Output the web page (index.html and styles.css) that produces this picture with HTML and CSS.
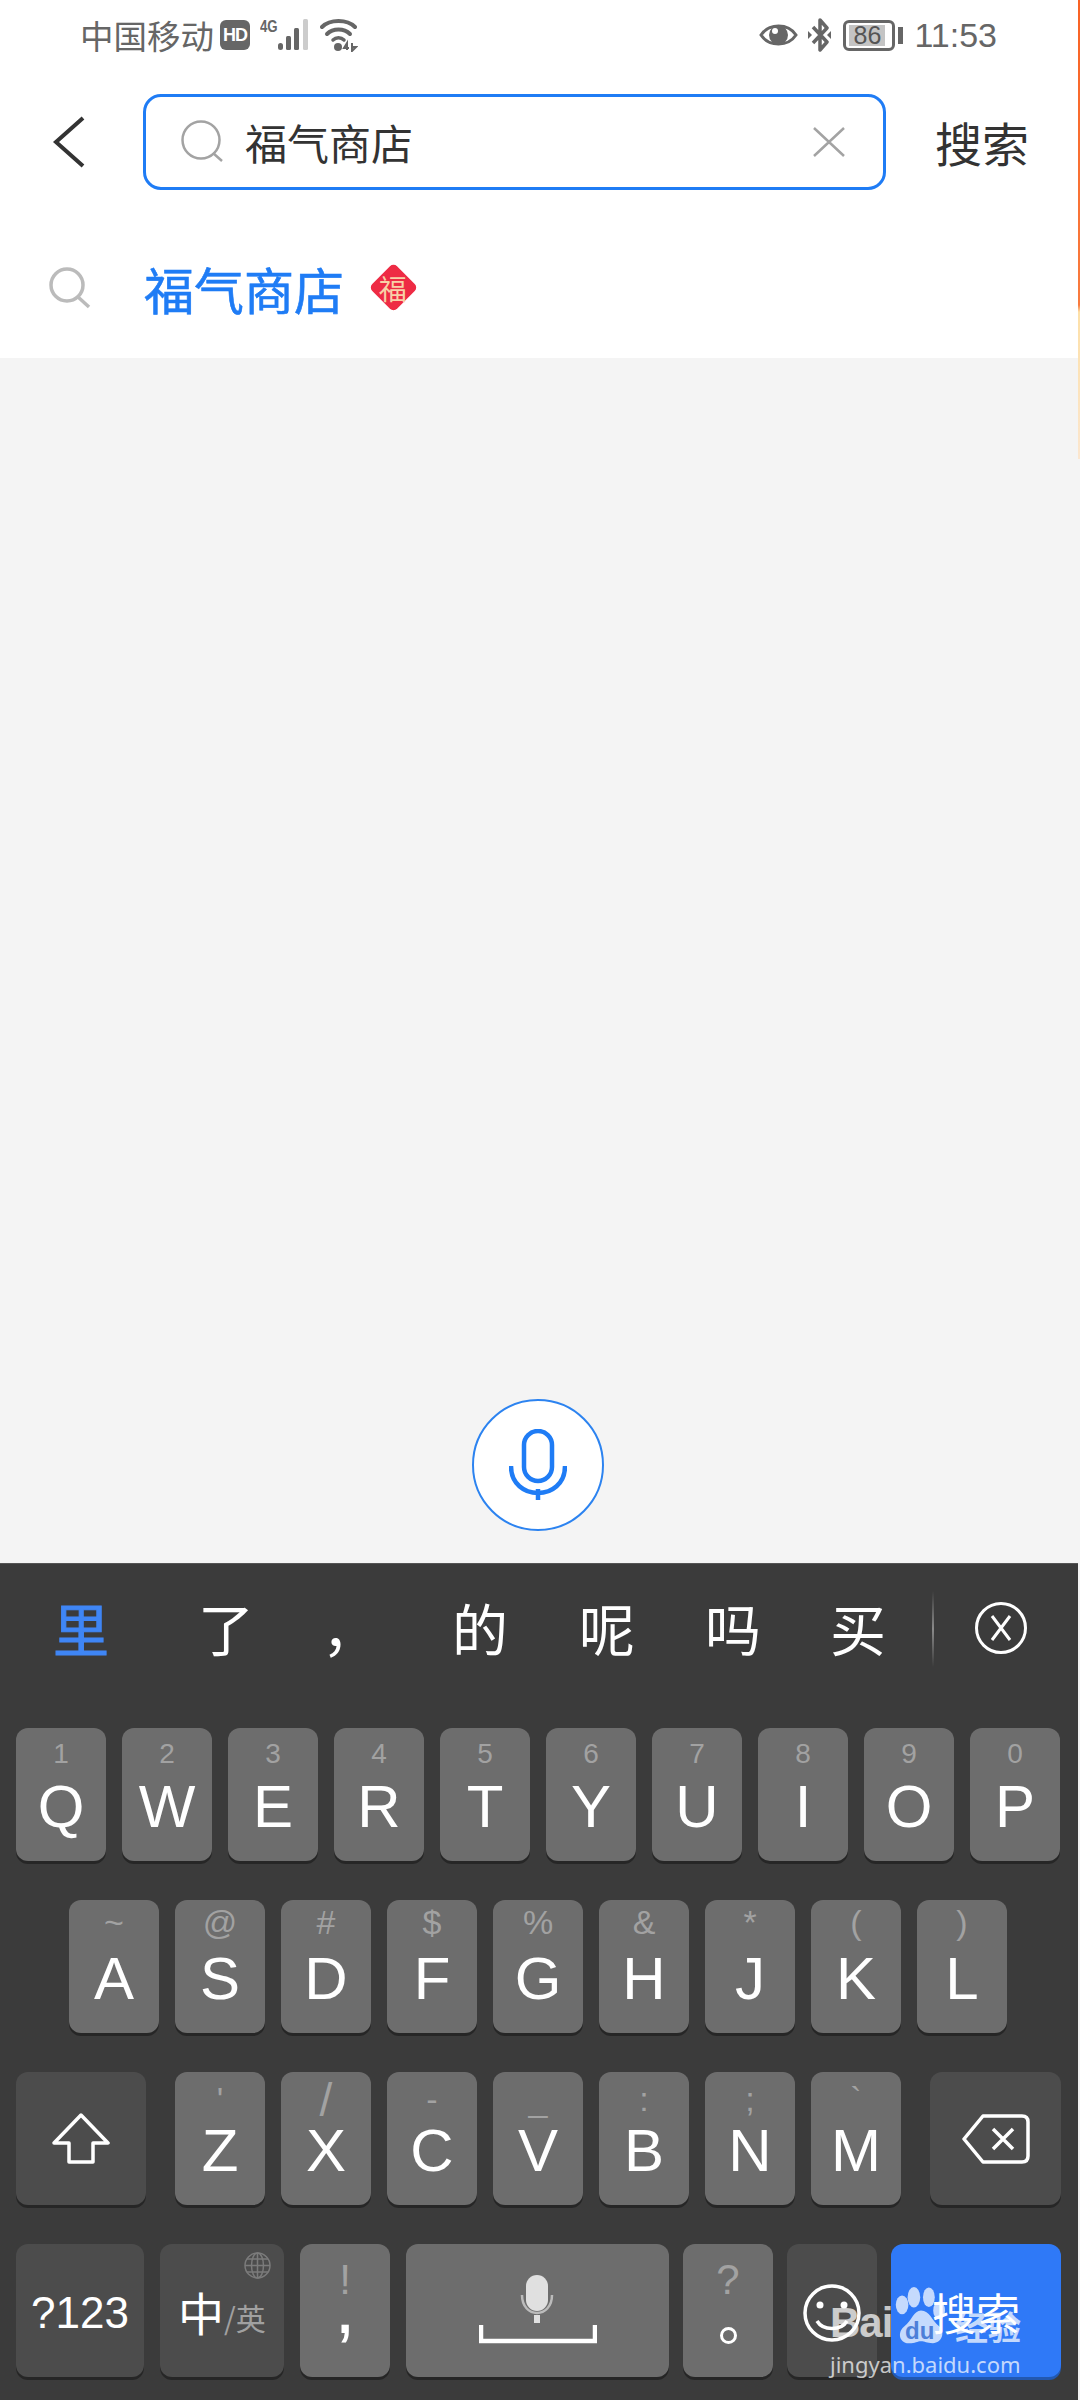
FILE: index.html
```html
<!DOCTYPE html>
<html lang="zh-CN">

<head>
    <meta charset="UTF-8">
    <title>搜索</title>
    <link rel="stylesheet" href="styles.css">
</head>

<body>
    <div class="screen">
        <div class="top">
            <div class="status">
                <div class="status-left">
                    <span class="carrier">中国移动</span>
                    <span class="hd-badge">HD</span>
                    <div class="signal">
                        <span class="net-text">4G</span>
                        <svg width="34" height="34" viewBox="18 0 34 34">
                            <rect x="18" y="25" width="5" height="7" rx="2.500" fill="#666" />
                            <rect x="26" y="18" width="5" height="14" rx="1.500" fill="#666" />
                            <rect x="34" y="10" width="5" height="22" rx="1.500" fill="#666" />
                            <rect x="43" y="1" width="5" height="31" rx="1.500" fill="#ccc" />
                        </svg>
                    </div>
                    <svg class="ico-wifi" width="38" height="34" viewBox="0 0 38 34">
                        <path d="M2 9 C10 1 27 1 35 9" fill="none" stroke="#666" stroke-width="4" stroke-linecap="round" />
                        <path d="M7 16 C13 10 24 10 30 16" fill="none" stroke="#666" stroke-width="4" stroke-linecap="round" />
                        <path d="M13 22 C16 19 21 19 24 22" fill="none" stroke="#666" stroke-width="3.500" stroke-linecap="round" />
                        <circle cx="18" cy="29" r="4" fill="#666" />
                        <path d="M27 32 V25 L24 30 H29 M32 25 V33 L36 29 H32" fill="none" stroke="#666" stroke-width="2" />
                    </svg>
                </div>
                <div class="status-right">
                    <svg width="39" height="24" viewBox="0 0 39 24">
                        <path d="M2 12 C10 0 29 0 37 12 C29 24 10 24 2 12 Z" fill="none" stroke="#666" stroke-width="3" />
                        <circle cx="19.500" cy="12" r="9.500" fill="#666" />
                        <circle cx="16" cy="8" r="3" fill="#fff" />
                    </svg>
                    <svg class="ico-bt" width="23" height="34" viewBox="0 0 23 34">
                        <path d="M5 9 L19 24 L12 32 V2 L19 10 L5 25" fill="none" stroke="#666" stroke-width="3.500" stroke-linejoin="round" />
                        <path d="M0 13 L4 17 L0 21 Z M23 13 L19 17 L23 21 Z" fill="#666" />
                    </svg>
                    <div class="battery">
                        <div class="battery-box"><span class="battery-fill">86</span></div>
                        <div class="battery-cap"></div>
                    </div>
                    <span class="clock">11:53</span>
                </div>
            </div>

            <div class="search-row">
                <svg class="back" width="36" height="54" viewBox="0 0 36 54">
                    <path d="M31 3 L4 27 L31 51" fill="none" stroke="#333" stroke-width="4" />
                </svg>
                <div class="search-box">
                    <svg width="44" height="44" viewBox="0 0 44 44">
                        <circle cx="20" cy="20" r="18.500" fill="none" stroke="#a3a3a3" stroke-width="2.500" />
                        <path d="M32 33 L41 41" stroke="#a3a3a3" stroke-width="2.500" />
                    </svg>
                    <span class="search-text">福气商店</span>
                    <svg class="clear" width="32" height="30" viewBox="0 0 32 30">
                        <path d="M1 1 L31 29 M31 1 L1 29" stroke="#a3a3a3" stroke-width="2.500" />
                    </svg>
                </div>
                <span class="search-btn">搜索</span>
            </div>

            <div class="suggest">
                <svg width="42" height="42" viewBox="0 0 42 42">
                    <circle cx="18" cy="18" r="16" fill="none" stroke="#bbb" stroke-width="3.500" />
                    <path d="M29 30 L40 40" stroke="#bbb" stroke-width="3.500" />
                </svg>
                <span class="suggest-text">福气商店</span>
                <div class="fu-badge"><span class="fu-char">福</span></div>
            </div>
        </div>

        <div class="blank">
            <div class="voice">
                <svg width="58" height="72" viewBox="0 0 58 72">
                    <rect x="15" y="2" width="28" height="50" rx="14" fill="none" stroke="#1f7cf5" stroke-width="4.500" />
                    <path d="M2 37 C2 73 56 73 56 37" fill="none" stroke="#1f7cf5" stroke-width="4.500" />
                    <path d="M29 60 V71" stroke="#1f7cf5" stroke-width="4.500" />
                </svg>
            </div>
        </div>

        <div class="keyboard">
            <div class="candidates">
                <span class="cand cand-active">里</span>
                <span class="cand">了</span>
                <span class="cand">，</span>
                <span class="cand">的</span>
                <span class="cand">呢</span>
                <span class="cand">吗</span>
                <span class="cand">买</span>
                <div class="cand-sep"></div>
                <svg width="52" height="52" viewBox="0 0 52 52">
                    <circle cx="26" cy="26" r="24.500" fill="none" stroke="#fff" stroke-width="3" />
                    <path d="M17 14 L35 38 M35 14 L17 38" stroke="#fff" stroke-width="3" />
                </svg>
            </div>

            <div class="keys">
                <div class="key-row row-1">
                    <div class="key"><i>1</i><b>Q</b></div>
                    <div class="key"><i>2</i><b>W</b></div>
                    <div class="key"><i>3</i><b>E</b></div>
                    <div class="key"><i>4</i><b>R</b></div>
                    <div class="key"><i>5</i><b>T</b></div>
                    <div class="key"><i>6</i><b>Y</b></div>
                    <div class="key"><i>7</i><b>U</b></div>
                    <div class="key"><i>8</i><b>I</b></div>
                    <div class="key"><i>9</i><b>O</b></div>
                    <div class="key"><i>0</i><b>P</b></div>
                </div>
                <div class="key-row row-2">
                    <div class="key"><i>~</i><b>A</b></div>
                    <div class="key"><i>@</i><b>S</b></div>
                    <div class="key"><i>#</i><b>D</b></div>
                    <div class="key"><i>$</i><b>F</b></div>
                    <div class="key"><i>%</i><b>G</b></div>
                    <div class="key"><i>&amp;</i><b>H</b></div>
                    <div class="key"><i>*</i><b>J</b></div>
                    <div class="key"><i>(</i><b>K</b></div>
                    <div class="key"><i>)</i><b>L</b></div>
                </div>
                <div class="key-row row-3">
                    <div class="key key-fn key-shift">
                        <svg width="58" height="52" viewBox="0 0 58 52">
                            <path d="M29 2 L56 30 H41 V49 H17 V30 H2 Z" fill="none" stroke="#fff" stroke-width="3.500" stroke-linejoin="round" />
                        </svg>
                    </div>
                    <div class="key"><i>'</i><b>Z</b></div>
                    <div class="key"><i class="tall">/</i><b>X</b></div>
                    <div class="key"><i>-</i><b>C</b></div>
                    <div class="key"><i>_</i><b>V</b></div>
                    <div class="key"><i>:</i><b>B</b></div>
                    <div class="key"><i>;</i><b>N</b></div>
                    <div class="key"><i>`</i><b>M</b></div>
                    <div class="key key-fn key-del">
                        <svg width="68" height="50" viewBox="0 0 68 50">
                            <path d="M2 25 L21 2 H60 Q66 2 66 8 V42 Q66 48 60 48 H21 Z" fill="none" stroke="#fff" stroke-width="3.500" stroke-linejoin="round" />
                            <path d="M31 15 L51 35 M51 15 L31 35" stroke="#fff" stroke-width="3.500" />
                        </svg>
                    </div>
                </div>
                <div class="key-row row-4">
                    <div class="key key-fn key-num"><span class="num-text">?123</span></div>
                    <div class="key key-fn key-lang">
                        <svg class="globe" width="27" height="27" viewBox="0 0 27 27">
                            <g fill="none" stroke="#7b7b7b" stroke-width="1.500">
                                <circle cx="13.500" cy="13.500" r="12.500" />
                                <ellipse cx="13.500" cy="13.500" rx="6" ry="12.500" />
                                <path d="M13.500 1 V26 M1 13.500 H26 M3 7 H24 M3 20 H24" />
                            </g>
                        </svg>
                        <span class="lang-zh">中</span><span class="lang-en">/英</span>
                    </div>
                    <div class="key key-punct"><i>!</i><b>,</b></div>
                    <div class="key key-space">
                        <svg width="118" height="74" viewBox="0 0 118 74">
                            <rect x="47" y="0" width="22" height="36" rx="11" fill="#e0e0e0" />
                            <path d="M43 20 C43 44 73 44 73 20" fill="none" stroke="#bbb" stroke-width="2.500" />
                            <rect x="55" y="40" width="6" height="8" fill="#e0e0e0" />
                            <path d="M2 50 V66 H116 V50" fill="none" stroke="#fff" stroke-width="4.500" />
                        </svg>
                    </div>
                    <div class="key key-punct key-period"><i>?</i><b class="punct-circle"></b></div>
                    <div class="key key-fn key-emoji">
                        <svg width="58" height="60" viewBox="0 0 58 60">
                            <circle cx="29" cy="30" r="27" fill="none" stroke="#fff" stroke-width="3.500" />
                            <circle cx="17" cy="22" r="3.500" fill="#fff" />
                            <circle cx="41" cy="22" r="3.500" fill="#fff" />
                            <path d="M14 38 C20 48 38 48 44 38" fill="none" stroke="#fff" stroke-width="3.500" />
                        </svg>
                    </div>
                    <div class="key key-go">搜索</div>
                </div>
            </div>
        </div>

        <div class="stripe"></div>

        <div class="watermark">
            <div class="wm-logo">
                <span class="wm-bai">Bai</span>
                <div class="wm-paw">
                    <svg width="52" height="58" viewBox="0 0 66 62" preserveAspectRatio="none">
                        <g fill="#fff" fill-opacity="0.72">
                            <ellipse cx="9" cy="19" rx="8" ry="10" />
                            <ellipse cx="24" cy="11" rx="8" ry="11" />
                            <ellipse cx="43" cy="11" rx="7.500" ry="10.500" />
                            <ellipse cx="56" cy="25" rx="7.500" ry="9.500" />
                            <path d="M33 25 C44 25 47 36 56 42 C64 48 60 60 48 60 C40 60 38 58 33 58 C28 58 24 61 15 60 C4 58 4 47 12 42 C21 36 24 25 33 25 Z" />
                        </g>
                    </svg>
                    <span class="wm-du">du</span>
                </div>
                <span class="wm-jy">经验</span>
            </div>
            <div class="wm-url">jingyan.baidu.com</div>
        </div>
    </div>
</body>

</html>
```

FILE: styles.css
```css
* {
    margin: 0;
    padding: 0;
    box-sizing: border-box;
}

body {
    width: 1080px;
    height: 2400px;
    overflow: hidden;
    font-family: "Noto Sans CJK SC", "Liberation Sans", sans-serif;
}

.screen {
    position: relative;
    width: 1080px;
    height: 2400px;
    display: flex;
    flex-direction: column;
    background: #f4f4f4;
}

svg {
    display: block;
    flex-shrink: 0;
}

/* top part */

.top {
    height: 358px;
    background: #fff;
}

.status {
    height: 70px;
    padding: 0 83px 0 80px;
    display: flex;
    justify-content: space-between;
    align-items: center;
    color: #666;
}

.status-left,
.status-right {
    display: flex;
    align-items: center;
}

.carrier {
    font-size: 33.500px;
    line-height: 34px;
}

.hd-badge {
    width: 30px;
    height: 30px;
    margin-left: 6px;
    border-radius: 6px;
    background: #666;
    color: #fff;
    font: bold 18px/30px "Liberation Sans", sans-serif;
    letter-spacing: -1px;
    text-align: center;
}

.signal {
    display: flex;
    align-items: flex-start;
    margin-left: 10px;
}

.net-text {
    width: 18px;
    font: bold 17px/17px "Liberation Sans", sans-serif;
    color: #666;
    transform: scaleX(0.78);
    transform-origin: left center;
    white-space: nowrap;
}

.ico-wifi {
    margin-left: 8px;
}

.status-right {
    gap: 10px;
}

.ico-bt {
    margin-right: 2px;
}

.battery {
    display: flex;
    align-items: center;
    gap: 3px;
}

.battery-box {
    width: 52px;
    height: 31px;
    border: 3px solid #666;
    border-radius: 6px;
    padding: 2px 3px;
}

.battery-fill {
    display: block;
    width: 36px;
    height: 21px;
    background: #c4c4c4;
    font: 25px/21px "Liberation Sans", sans-serif;
    text-align: center;
    color: #555;
}

.battery-cap {
    width: 5px;
    height: 17px;
    background: #666;
}

.clock {
    margin-left: 1px;
    font: 34px "Liberation Sans", sans-serif;
    color: #666;
}

.search-row {
    height: 99px;
    margin-top: 22px;
    display: flex;
    align-items: center;
    padding-left: 52px;
}

.back {
    margin-right: 55px;
}

.search-box {
    width: 743px;
    height: 96px;
    border: 3px solid #1f7cf5;
    border-radius: 18px;
    display: flex;
    align-items: center;
    padding: 0 38px 0 35px;
}

.search-text {
    margin-left: 20px;
    font-size: 42px;
    color: #333;
}

.clear {
    margin-left: auto;
}

.search-btn {
    margin-left: 49px;
    font-size: 47px;
    color: #333;
}

.suggest {
    height: 167px;
    padding-top: 26px;
    display: flex;
    align-items: center;
    padding-left: 49px;
}

.suggest-text {
    margin-left: 53px;
    font-size: 50px;
    color: #1f7cf5;
    -webkit-text-stroke: 0.6px #1f7cf5;
}

.fu-badge {
    margin-left: 32px;
    width: 35px;
    height: 35px;
    border-radius: 5px;
    background: #ee2b44;
    transform: rotate(45deg);
    display: flex;
    align-items: center;
    justify-content: center;
}

.fu-char {
    transform: rotate(-45deg);
    font-size: 28px;
    line-height: 34px;
    color: #f8d0a8;
}

/* blank middle with the voice button */

.blank {
    flex: 1;
    display: flex;
    align-items: flex-end;
    justify-content: center;
    padding-bottom: 32px;
}

.voice {
    width: 132px;
    height: 132px;
    margin-left: -4px;
    border: 2px solid #2c83f0;
    border-radius: 50%;
    background: #fff;
    display: flex;
    align-items: center;
    justify-content: center;
}

/* keyboard */

.keyboard {
    width: 1078px;
    height: 837px;
    background: #3b3b3b;
    border-top: 1px solid #555;
}

.candidates {
    height: 164px;
    padding-top: 35px;
    display: flex;
    align-items: flex-start;
}

.cand {
    width: 0;
    display: flex;
    justify-content: center;
    font-size: 56px;
    line-height: 56px;
    color: #fff;
    white-space: nowrap;
}

.cand:nth-child(1) { margin-left: 81px; }
.cand:nth-child(2) { margin-left: 145px; }
.cand:nth-child(3) { margin-left: 124px; }
.cand:nth-child(4) { margin-left: 130px; }
.cand:nth-child(5) { margin-left: 127px; }
.cand:nth-child(6) { margin-left: 126px; }
.cand:nth-child(7) { margin-left: 125px; }

.cand-active {
    color: #3f86f5;
    -webkit-text-stroke: 1px #3f86f5;
}

.cand-sep {
    width: 2px;
    height: 76px;
    margin-left: 74px;
    margin-top: -8px;
    background: linear-gradient(to bottom, #3b3b3b, #8a8a8a 50%, #3b3b3b);
}

.candidates svg {
    margin-left: 41px;
    margin-top: 3px;
}

.keys {
    padding-left: 16px;
    display: flex;
    flex-direction: column;
    gap: 39px;
}

.key-row {
    display: flex;
    gap: 16px;
    height: 133px;
}

.row-2 {
    padding-left: 53px;
}

.key {
    position: relative;
    width: 90px;
    height: 133px;
    border-radius: 12px;
    background: #6d6d6d;
    box-shadow: 0 3px 0 #262626;
    color: #fff;
    display: flex;
    flex-direction: column;
    align-items: center;
    font-family: "Liberation Sans", sans-serif;
}

.key i {
    position: absolute;
    top: 6px;
    left: 0;
    right: 0;
    text-align: center;
    font-style: normal;
    font-size: 28px;
    line-height: 40px;
    color: #a2a2a2;
}

.row-2 .key i {
    top: 2px;
    font-size: 34px;
}

.row-3 .key i {
    top: 7px;
    font-size: 34px;
}

.row-3 .key i.tall {
    top: 8px;
    font-size: 46px;
}

.key b {
    position: absolute;
    top: 46px;
    left: 0;
    right: 0;
    text-align: center;
    font-weight: normal;
    font-size: 60px;
    line-height: 66px;
}

.key-fn {
    background: #4c4c4c;
    align-items: center;
    justify-content: center;
}

.key-shift {
    width: 130px;
    margin-right: 13px;
}

.key-del {
    width: 131px;
    margin-left: 13px;
}

.key-num {
    width: 128px;
    padding-top: 4px;
}

.num-text {
    font-size: 44px;
}

.key-lang {
    width: 124px;
    flex-direction: row;
    align-items: flex-end;
    padding-bottom: 38px;
    font-family: "Noto Sans CJK SC", sans-serif;
}

.globe {
    position: absolute;
    top: 8px;
    right: 13px;
}

.lang-zh {
    font-size: 46px;
    line-height: 56px;
}

.lang-en {
    font-size: 30px;
    line-height: 44px;
    color: #a0a0a0;
}

.key-punct i {
    top: 16px;
    font-size: 42px;
}

.key-punct b {
    top: 30px;
    font-size: 76px;
}

.key-punct .punct-circle {
    top: 83px;
    left: 37px;
    right: auto;
    width: 17px;
    height: 17px;
    border: 3.500px solid #fff;
    border-radius: 50%;
}

.key-space {
    width: 263px;
    margin-right: -2px;
    padding-top: 31px;
}

.key-period {
    margin-right: -2px;
}

.key-emoji {
    margin-right: -2px;
    padding-top: 4px;
}

.key-go {
    width: 170px;
    background: #2f79f7;
    box-shadow: 0 3px 0 #2258b0;
    justify-content: center;
    padding-top: 2px;
    font-family: "Noto Sans CJK SC", sans-serif;
    font-size: 44px;
}

/* orange edge of the window behind */

.stripe {
    position: absolute;
    top: 0;
    right: 0;
    width: 2px;
    height: 459px;
    background: linear-gradient(to bottom, #f96224 0, #f97b3e 305px, #fde0a8 312px, #fbe6cf 459px);
}

/* watermark */

.watermark {
    position: absolute;
    left: 830px;
    top: 2285px;
    width: 200px;
    color: rgba(255, 255, 255, 0.72);
}

.wm-logo {
    height: 60px;
    display: flex;
    align-items: flex-end;
}

.wm-bai {
    width: 65px;
    font: bold 42px/44px "Liberation Sans", sans-serif;
    letter-spacing: -1px;
}

.wm-paw {
    position: relative;
    width: 52px;
}

.wm-du {
    position: absolute;
    left: 10px;
    bottom: 2px;
    font: bold 24px/24px "Liberation Sans", sans-serif;
    color: #4d7fd8;
}

.wm-jy {
    margin-left: 8px;
    font-size: 33px;
    line-height: 38px;
    font-weight: bold;
}

.wm-url {
    margin-top: 5px;
    font: 22px/28px "Noto Sans", sans-serif;
    white-space: nowrap;
}
```
